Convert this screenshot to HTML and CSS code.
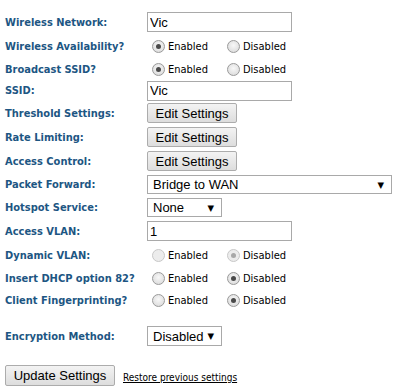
FILE: index.html
```html
<!DOCTYPE html>
<html lang="en">
<head>
    <meta charset="UTF-8" />
    <title>Wireless Settings</title>
    <link rel="stylesheet" href="styles.css">
</head>
<body>
    <form class="settings">
        <div class="row h24">
            <label class="field-label">Wireless Network:</label>
            <input class="text-input" type="text" value="Vic" />
        </div>
        <div class="row h24">
            <span class="field-label">Wireless Availability?</span>
            <span class="option"><span class="radio checked"></span>Enabled</span>
            <span class="option"><span class="radio"></span>Disabled</span>
        </div>
        <div class="row h22">
            <span class="field-label">Broadcast SSID?</span>
            <span class="option"><span class="radio checked"></span>Enabled</span>
            <span class="option"><span class="radio"></span>Disabled</span>
        </div>
        <div class="row h21">
            <label class="field-label">SSID:</label>
            <input class="text-input" type="text" value="Vic" />
        </div>
        <div class="row h24">
            <span class="field-label">Threshold Settings:</span>
            <button type="button" class="btn">Edit Settings</button>
        </div>
        <div class="row h24">
            <span class="field-label">Rate Limiting:</span>
            <button type="button" class="btn">Edit Settings</button>
        </div>
        <div class="row h24">
            <span class="field-label">Access Control:</span>
            <button type="button" class="btn">Edit Settings</button>
        </div>
        <div class="row h23">
            <span class="field-label">Packet Forward:</span>
            <span class="select wide">Bridge to WAN<span class="arrow">▼</span></span>
        </div>
        <div class="row h23">
            <span class="field-label">Hotspot Service:</span>
            <span class="select">None<span class="arrow">▼</span></span>
        </div>
        <div class="row h24">
            <label class="field-label">Access VLAN:</label>
            <input class="text-input" type="text" value="1" />
        </div>
        <div class="row h25">
            <span class="field-label">Dynamic VLAN:</span>
            <span class="option"><span class="radio disabled"></span>Enabled</span>
            <span class="option"><span class="radio checked disabled"></span>Disabled</span>
        </div>
        <div class="row h21">
            <span class="field-label">Insert DHCP option 82?</span>
            <span class="option"><span class="radio"></span>Enabled</span>
            <span class="option"><span class="radio checked"></span>Disabled</span>
        </div>
        <div class="row h22">
            <span class="field-label">Client Fingerprinting?</span>
            <span class="option"><span class="radio"></span>Enabled</span>
            <span class="option"><span class="radio checked"></span>Disabled</span>
        </div>

        <div class="row h22 spaced">
            <span class="field-label">Encryption Method:</span>
            <span class="select tall">Disabled<span class="arrow">▼</span></span>
        </div>

        <div class="actions">
            <button type="button" class="btn btn-update">Update Settings</button>
            <a href="#" class="restore">Restore previous settings</a>
        </div>
    </form>
</body>
</html>
```

FILE: styles.css
```css
body {
    margin: 0;
    padding: 10px 5px;
    background-color: #fff;
    font-family: "DejaVu Sans Condensed", "DejaVu Sans", sans-serif;
    font-size: 11px;
    color: #000;
}

.row {
    display: flex;
    align-items: center;
}

.h21 { height: 21px; }
.h22 { height: 22px; }
.h23 { height: 23px; }
.h24 { height: 24px; }
.h25 { height: 25px; }

.spaced {
    margin-top: 14px;
}

.field-label {
    width: 142px;
    flex: none;
    font-weight: bold;
    color: #1d5683;
}

.text-input {
    width: 145px;
    height: 20px;
    box-sizing: border-box;
    margin: 0;
    padding: 0 2px;
    border: 1px solid #a9a9a9;
    font-family: "Liberation Sans", Arial, sans-serif;
    font-size: 13px;
    color: #000;
}

.btn {
    width: 90px;
    height: 20px;
    box-sizing: border-box;
    margin: 0;
    padding: 0;
    border: 1px solid #acacac;
    border-radius: 2px;
    background: linear-gradient(#f3f3f3, #dddddd);
    font-family: "Liberation Sans", Arial, sans-serif;
    font-size: 13px;
    color: #000;
}

/* Drop-downs drawn as boxes with a small arrow */
.select {
    position: relative;
    display: inline-flex;
    align-items: center;
    width: 75px;
    height: 19px;
    box-sizing: border-box;
    padding-left: 5px;
    border: 1px solid #a9a9a9;
    font-family: "Liberation Sans", Arial, sans-serif;
    font-size: 13px;
}

.select.wide {
    width: 245px;
}

.select.tall {
    height: 20px;
}

.arrow {
    position: absolute;
    right: 7px;
    top: 50%;
    transform: translateY(-50%);
    font-family: "DejaVu Sans", sans-serif;
    font-size: 8.5px;
    line-height: 1;
}

/* Radio options */
.option {
    display: inline-flex;
    align-items: center;
    width: 75px;
}

.radio {
    width: 13px;
    height: 13px;
    box-sizing: border-box;
    margin: 0 3px 0 5px;
    border: 1px solid #9a9a9a;
    border-radius: 50%;
    background: radial-gradient(circle at 50% 40%, #f8f8f8, #d6d6d6);
    display: inline-flex;
    align-items: center;
    justify-content: center;
}

.radio.checked::after {
    content: "";
    width: 5px;
    height: 5px;
    border-radius: 50%;
    background-color: #4a4a4a;
}

.radio.disabled {
    border-color: #c8c8c8;
    background: #ececec;
}

.radio.disabled.checked::after {
    background-color: #a8a8a8;
}

.actions {
    display: flex;
    align-items: center;
    gap: 8px;
    margin-top: 18px;
}

.btn-update {
    width: 110px;
    height: 21px;
}

.restore {
    color: #000;
    text-decoration: underline;
    font-size: 10px;
    margin-top: 4px;
}
```
